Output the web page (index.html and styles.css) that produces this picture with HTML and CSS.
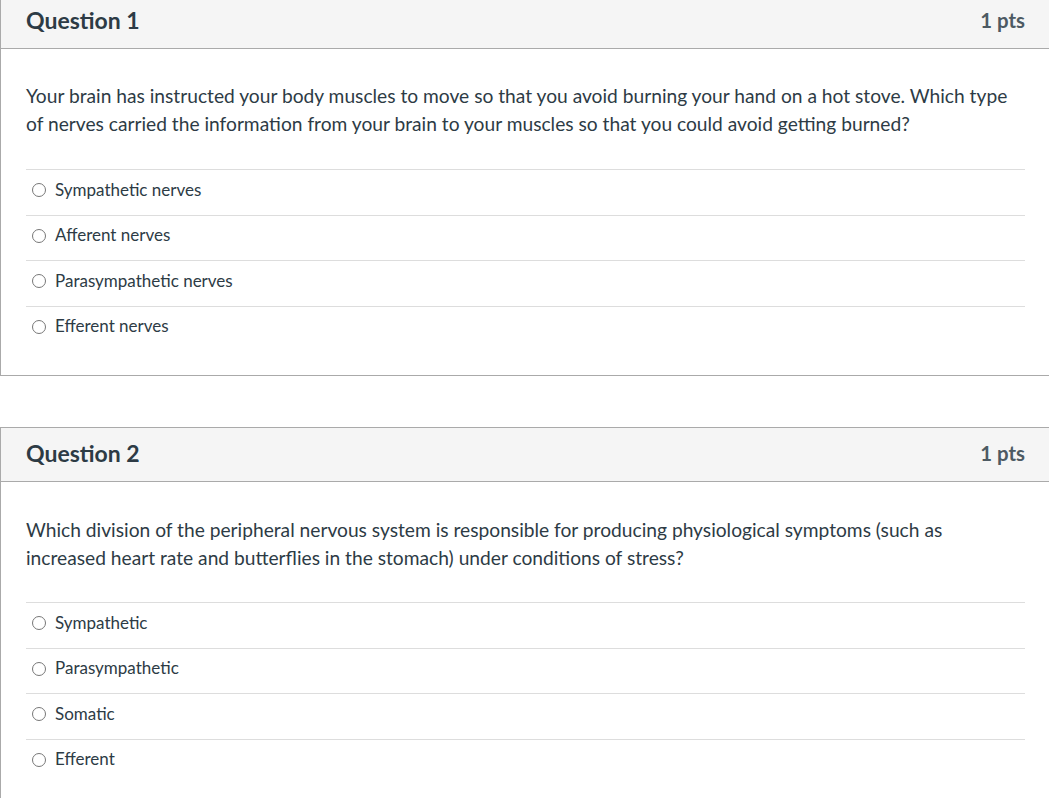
FILE: index.html
```html
<!DOCTYPE html>
<html lang="en">
<head>
<meta charset="utf-8">
<title>Quiz</title>
<link rel="stylesheet" href="styles.css">
</head>
<body>
<div class="quiz">
  <div class="question">
    <div class="q-header">
      <h2 class="q-title">Question 1</h2>
      <span class="q-pts">1 pts</span>
    </div>
    <div class="q-body">
      <p class="q-text">Your brain has instructed your body muscles to move so that you avoid burning your hand on a hot stove. Which type of nerves carried the information from your brain to your muscles so that you could avoid getting burned?</p>
      <div class="answers">
        <label class="answer"><span class="radio"></span><span class="a-text">Sympathetic nerves</span></label>
        <label class="answer"><span class="radio"></span><span class="a-text">Afferent nerves</span></label>
        <label class="answer"><span class="radio"></span><span class="a-text">Parasympathetic nerves</span></label>
        <label class="answer"><span class="radio"></span><span class="a-text">Efferent nerves</span></label>
      </div>
    </div>
  </div>
  <div class="question">
    <div class="q-header">
      <h2 class="q-title">Question 2</h2>
      <span class="q-pts">1 pts</span>
    </div>
    <div class="q-body">
      <p class="q-text q-text-2">Which division of the peripheral nervous system is responsible for producing physiological symptoms (such as increased heart rate and butterflies in the stomach) under conditions of stress?</p>
      <div class="answers">
        <label class="answer"><span class="radio"></span><span class="a-text">Sympathetic</span></label>
        <label class="answer"><span class="radio"></span><span class="a-text">Parasympathetic</span></label>
        <label class="answer"><span class="radio"></span><span class="a-text">Somatic</span></label>
        <label class="answer"><span class="radio"></span><span class="a-text">Efferent</span></label>
      </div>
    </div>
  </div>
</div>
</body>
</html>
```
FILE: styles.css
```css
html, body {
  margin: 0;
  padding: 0;
  background: #fff;
  overflow: hidden;
}
body {
  font-family: Lato, "Noto Sans", sans-serif;
  color: #2d3b45;
}
.quiz {
  margin-top: -6px;
}
.question {
  border: 1px solid #aaaaaa;
  border-right: none;
  margin-bottom: 51px;
}
.q-header {
  display: flex;
  justify-content: space-between;
  align-items: center;
  height: 50px;
  padding: 0 24px 3px 25px;
  background: #f5f5f5;
  border-bottom: 1px solid #aaaaaa;
}
.q-title {
  margin: 0;
  font-size: 23px;
  font-weight: 700;
  color: #2d3b45;
}
.q-pts {
  font-size: 20.4px;
  font-weight: 700;
  color: #4d5a63;
}
.q-body {
  padding: 0 24px 24px 24px;
}
.q-text {
  margin: 0;
  padding: 33px 0 31px 1px;
  font-size: 19.2px;
  line-height: 28px;
}
.q-text-2 {
  padding-top: 34px;
  padding-bottom: 30px;
}
.answers {
  display: flex;
  flex-direction: column;
  margin-left: 1px;
}
.answer {
  display: flex;
  align-items: center;
  height: 44.5px;
  padding-left: 6px;
  border-top: 1px solid #dddddd;
  font-size: 17px;
}
.radio {
  width: 12px;
  height: 12px;
  border: 1.3px solid #777777;
  border-radius: 50%;
  margin-right: 9px;
  margin-top: -4px;
  flex: none;
}
.a-text {
  margin-top: -6px;
}
```
